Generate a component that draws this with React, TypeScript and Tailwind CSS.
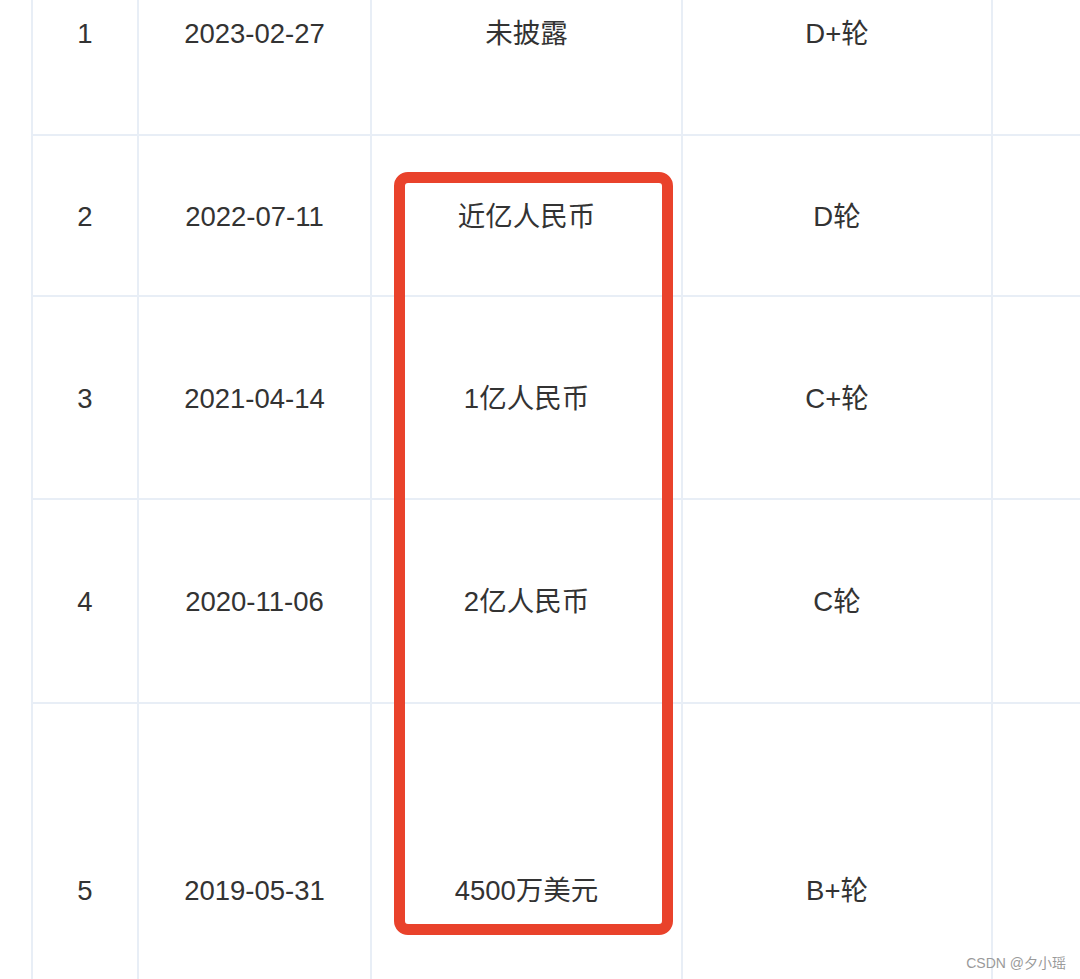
const rows = [
  { no: '1', date: '2023-02-27', amount: '未披露', round: 'D+轮', h: 'h-[204px]' },
  { no: '2', date: '2022-07-11', amount: '近亿人民币', round: 'D轮', h: 'h-[161px]' },
  { no: '3', date: '2021-04-14', amount: '1亿人民币', round: 'C+轮', h: 'h-[203px]' },
  { no: '4', date: '2020-11-06', amount: '2亿人民币', round: 'C轮', h: 'h-[204px]' },
  { no: '5', date: '2019-05-31', amount: '4500万美元', round: 'B+轮', h: 'h-[374px]' },
];

function Cell({ children, h }: { children?: React.ReactNode; h: string }) {
  return (
    <div
      className={`${h} flex items-center justify-center pt-[2px] border-r-2 border-b-2 border-[#e8eef6]`}
    >
      {children}
    </div>
  );
}

export default function App() {
  return (
    <div
      className="relative w-[1080px] h-[979px] overflow-hidden bg-white text-[#333] text-[27.5px]"
      style={{ fontFamily: '"Liberation Sans", "Noto Sans CJK SC", sans-serif' }}
    >
      <div className="-mt-[68px] ml-[31px] w-[1300px] border-l-2 border-[#e8eef6] grid grid-cols-[106px_233px_311px_310px_300px]">
        {rows.map((r) => (
          <div key={r.no} className="contents">
            <Cell h={r.h}>{r.no}</Cell>
            <Cell h={r.h}>{r.date}</Cell>
            <Cell h={r.h}>{r.amount}</Cell>
            <Cell h={r.h}>{r.round}</Cell>
            <Cell h={r.h} />
          </div>
        ))}
      </div>

      {/* highlight box */}
      <div className="absolute left-[394px] top-[172px] w-[279px] h-[763px] border-[11px] border-[#e9422b] rounded-[14px]" />

      <div className="absolute right-[14px] top-[954px] text-[14px] leading-[18px] text-[#9a9a9a]">
        CSDN @夕小瑶
      </div>
    </div>
  );
}
